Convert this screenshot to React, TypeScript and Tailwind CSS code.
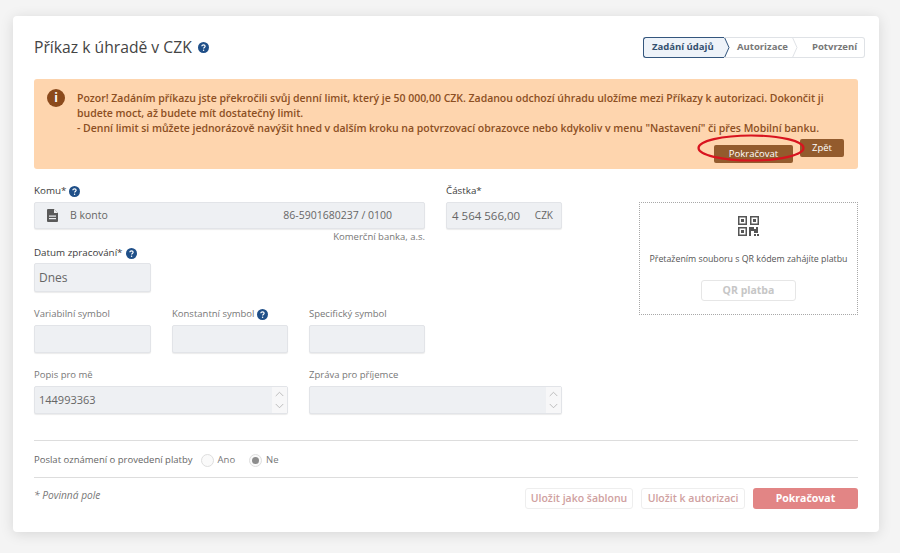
import { ChevronUp, ChevronDown } from 'lucide-react';

const fontClass = "font-['Open_Sans','Noto_Sans',sans-serif]";
const fieldClass = "bg-[#eef0f3] border border-[#e2e4e8] rounded-[2px] shadow-[0_1px_1px_rgba(0,0,0,0.08)]";

function HelpIcon({ size = 11 }: { size?: number }) {
  return (
    <svg width={size} height={size} viewBox="0 0 12 12" className="shrink-0">
      <circle cx="6" cy="6" r="6" fill="#1f4f88" />
      <path d="M4.2 4.7c0-1 .8-1.6 1.8-1.6s1.8.6 1.8 1.5c0 1.3-1.7 1.3-1.7 2.5" fill="none" stroke="#fff" strokeWidth="1.3" />
      <circle cx="6.1" cy="9" r=".8" fill="#fff" />
    </svg>
  );
}

function DocIcon() {
  return (
    <svg width="11" height="13" viewBox="0 0 11 13" className="shrink-0">
      <path d="M1 0 H7 L11 4 V12 a1 1 0 0 1 -1 1 H1 a1 1 0 0 1 -1 -1 V1 a1 1 0 0 1 1 -1 Z" fill="#5a5a5a" />
      <path d="M7 0 V4 H11" fill="#f0f0f0" />
      <rect x="2" y="6.5" width="7" height="1.2" fill="#eef0f3" />
      <rect x="2" y="9" width="7" height="1.2" fill="#eef0f3" />
    </svg>
  );
}

function QrIcon() {
  return (
    <svg width="21" height="20" viewBox="0 0 21 20" className="shrink-0" fill="#555">
      <path fillRule="evenodd" d="M0 0h9v9H0zM1.5 1.5v6h6v-6z" />
      <rect x="3" y="3" width="3" height="3" />
      <path fillRule="evenodd" d="M12 0h9v9h-9zM13.5 1.5v6h6v-6z" />
      <rect x="15" y="3" width="3" height="3" />
      <path fillRule="evenodd" d="M0 11h9v9H0zM1.5 12.5v6h6v-6z" />
      <rect x="3" y="14" width="3" height="3" />
      <path d="M11 11h5v2h2v-2h2v6h-4v-2h-3v5h-2z" />
      <rect x="16" y="18" width="2" height="2" />
      <rect x="19" y="18" width="2" height="2" />
    </svg>
  );
}

function Label({ text, help, dark }: { text: string; help?: boolean; dark?: boolean }) {
  return (
    <div className={`flex items-center gap-[3px] h-[16px] ${dark ? 'text-[9.8px] text-[#3c3c3c]' : 'text-[9.5px] text-[#777]'}`}>
      <span>{text}</span>
      {help && <HelpIcon />}
    </div>
  );
}

function SymbolField({ label, help, width }: { label: string; help?: boolean; width: string }) {
  return (
    <div className={width}>
      <Label text={label} help={help} />
      <div className={`${fieldClass} h-[28px] mt-[3px]`} />
    </div>
  );
}

function TextArea({ label, value, width }: { label: string; value?: string; width: string }) {
  return (
    <div className={width}>
      <Label text={label} />
      <div className={`${fieldClass} h-[28px] mt-[3px] flex items-center justify-between pl-[4px] text-[11px] text-[#666]`}>
        <span>{value}</span>
        <div className="w-[15px] h-full bg-[#f7f7f8] flex flex-col items-center justify-center text-[#b0b0b0]">
          <ChevronUp size={15} strokeWidth={1.4} className="-mb-[1px]" />
          <ChevronDown size={15} strokeWidth={1.4} className="-mt-[1px]" />
        </div>
      </div>
    </div>
  );
}

function Radio({ label, checked }: { label: string; checked?: boolean }) {
  return (
    <div className="flex items-center gap-[4px]">
      <div className="w-[13px] h-[13px] rounded-full border border-[#dedede] bg-[#fafafa] flex items-center justify-center">
        {checked && <div className="w-[7px] h-[7px] rounded-full bg-[#8d8d8d]" />}
      </div>
      <span className="text-[9.5px] text-[#777]">{label}</span>
    </div>
  );
}

function Steps() {
  return (
    <div className="flex h-[21px] -mr-[7px] text-[9.5px] font-bold">
      <div className="relative w-[81px] flex items-center pl-[8px] bg-[#eef3f9] border border-[#34567d] border-r-0 rounded-l-[3px] text-[#34506f]">
        Zadání údajů
        <svg width="6" height="21" viewBox="0 0 6 21" className="absolute -right-[6px] -top-[1px]">
          <path d="M0 0 L1 0 L5.5 10.5 L1 21 L0 21 Z" fill="#eef3f9" />
          <path d="M0.5 0.5 L5 10.5 L0.5 20.5" fill="none" stroke="#34567d" />
        </svg>
      </div>
      <div className="relative w-[74px] flex items-center pl-[13px] border-y border-[#dfe2e6] text-[#777]">
        Autorizace
        <svg width="6" height="21" viewBox="0 0 6 21" className="absolute right-0 -top-[1px]">
          <path d="M0.5 0.5 L5 10.5 L0.5 20.5" fill="none" stroke="#dfe2e6" />
        </svg>
      </div>
      <div className="w-[67px] flex items-center pl-[14px] border border-l-0 border-[#dfe2e6] rounded-r-[3px] text-[#777]">
        Potvrzení
      </div>
    </div>
  );
}

export default function App() {
  return (
    <div className={`${fontClass} w-[900px] h-[553px] bg-[#f4f4f4] pt-[16px] pl-[13px] overflow-hidden`}>
      <div className="w-[866px] h-[516px] bg-white rounded-[4px] shadow-[0_2px_14px_rgba(0,0,0,0.12)] pt-[21px] px-[21px]">
        {/* Header */}
        <div className="flex items-center justify-between h-[21px]">
          <div className="flex items-center gap-[6px]">
            <h1 className="text-[15.7px] text-[#444] font-normal">Příkaz k úhradě v CZK</h1>
            <HelpIcon />
          </div>
          <Steps />
        </div>

        {/* Warning */}
        <div className="mt-[21px] h-[90px] bg-[#fed5ae] rounded-[3px] pt-[12px] pl-[13px] pr-[14px] flex">
          <div className="w-[18px] h-[18px] -mt-[2px] rounded-full bg-[#8b4a1c] flex items-center justify-center text-white text-[12px] font-bold shrink-0">i</div>
          <div className="ml-[12px] flex-1">
            <p className="text-[10.5px] leading-[15px] font-semibold tracking-[-0.02px] text-[#8c4f23] whitespace-nowrap">
              Pozor! Zadáním příkazu jste překročili svůj denní limit, který je 50 000,00 CZK. Zadanou odchozí úhradu uložíme mezi Příkazy k autorizaci. Dokončit ji
              <br />
              budete moct, až budete mít dostatečný limit.
              <br />
              - Denní limit si můžete jednorázově navýšit hned v dalším kroku na potvrzovací obrazovce nebo kdykoliv v menu "Nastavení" či přes Mobilní banku.
            </p>
            <div className="flex justify-end gap-[7px] mt-[3px]">
              <div className="relative">
                <button className="w-[79px] h-[18px] bg-[#935b2d] rounded-[2px] text-white text-[9.5px] font-medium">Pokračovat</button>
                <svg width="108" height="28" viewBox="0 0 108 28" className="absolute -left-[17px] -top-[5px]">
                  <ellipse cx="54" cy="14" rx="52.5" ry="12.5" fill="none" stroke="#d8141f" strokeWidth="2.2" />
                </svg>
              </div>
              <button className="w-[44px] h-[18px] bg-[#935b2d] rounded-[2px] text-white text-[9.5px] font-medium">Zpět</button>
            </div>
          </div>
        </div>

        {/* Form */}
        <div className="flex mt-[14px]">
          <div className="w-[528px]">
            <div className="flex">
              <div className="w-[391px]">
                <Label text="Komu*" help dark />
                <div className={`${fieldClass} h-[27px] mt-[3px] flex items-center pl-[12px] text-[10.5px] text-[#666]`}>
                  <DocIcon />
                  <span className="ml-[12px]">B konto</span>
                  <span className="ml-auto mr-[32px]">86-5901680237 / 0100</span>
                </div>
                <div className="mt-[1px] h-[14px] text-right text-[9.5px] leading-[14px] text-[#777]">Komerční banka, a.s.</div>
                <div className="mt-[1px]">
                  <Label text="Datum zpracování*" help dark />
                </div>
                <div className={`${fieldClass} w-[117px] h-[29px] mt-[2px] flex items-center pl-[4px] text-[12px] text-[#666]`}>Dnes</div>
              </div>
              <div className="w-[116px] ml-[21px]">
                <Label text="Částka*" dark />
                <div className={`${fieldClass} h-[27px] mt-[3px] flex items-center justify-between pl-[5px] pr-[8px] text-[11.5px] text-[#666]`}>
                  <span>4 564 566,00</span>
                  <span className="text-[10px]">CZK</span>
                </div>
              </div>
            </div>

            <div className="flex gap-[21px] mt-[14px]">
              <SymbolField label="Variabilní symbol" width="w-[117px]" />
              <SymbolField label="Konstantní symbol" help width="w-[116px]" />
              <SymbolField label="Specifický symbol" width="w-[116px]" />
            </div>

            <div className="flex gap-[21px] mt-[14px]">
              <TextArea label="Popis pro mě" value="144993363" width="w-[254px]" />
              <TextArea label="Zpráva pro příjemce" width="w-[253px]" />
            </div>
          </div>

          <div className="w-[219px] h-[113px] ml-[77px] mt-[19px] border border-dotted border-[#a8a8a8] flex flex-col items-center pt-[13px]">
            <QrIcon />
            <p className="mt-[17px] text-[8.8px] text-[#555] whitespace-nowrap">Přetažením souboru s QR kódem zahájíte platbu</p>
            <button className="mt-[14px] w-[95px] h-[21px] border border-[#e6e6e6] rounded-[3px] text-[10.5px] font-bold text-[#c6c6c6]">QR platba</button>
          </div>
        </div>

        {/* Notification */}
        <div className="mt-[26px] border-y border-[#ddd] h-[38px] pt-[3px] flex items-center">
          <span className="text-[9.5px] text-[#666] mr-[8px]">Poslat oznámení o provedení platby</span>
          <Radio label="Ano" />
          <div className="w-[14px]" />
          <Radio label="Ne" checked />
        </div>

        {/* Footer */}
        <div className="mt-[10px] flex items-center">
          <span className="text-[10.2px] italic text-[#777] mb-[6px]">* Povinná pole</span>
          <div className="ml-auto flex gap-[8px] text-[10.5px] font-semibold">
            <button className="w-[108px] h-[21px] border border-[#eee] rounded-[3px] text-[#cfa0a0]">Uložit jako šablonu</button>
            <button className="w-[104px] h-[21px] border border-[#eee] rounded-[3px] text-[#cfa0a0]">Uložit k autorizaci</button>
            <button className="w-[105px] h-[21px] bg-[#e28585] rounded-[3px] text-white font-bold">Pokračovat</button>
          </div>
        </div>
      </div>
    </div>
  );
}
